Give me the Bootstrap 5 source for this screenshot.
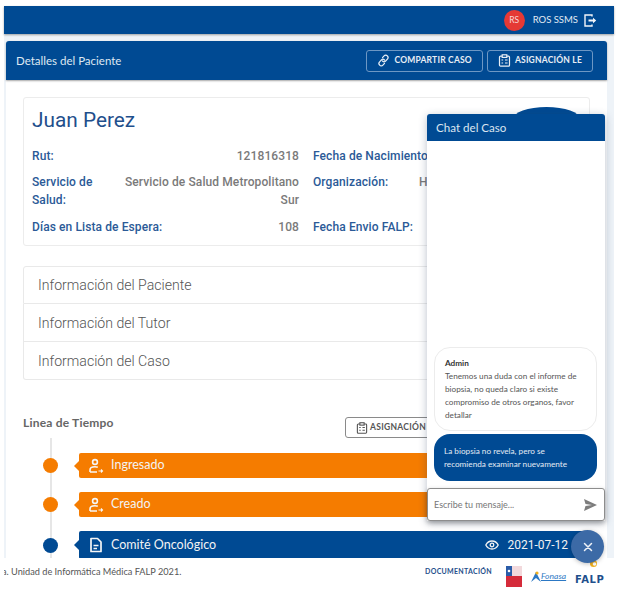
<!DOCTYPE html>
<html lang="es">
<head>
  <meta charset="UTF-8">
  <meta name="viewport" content="width=device-width, initial-scale=1">
  <title>Detalles del Paciente</title>
  <link href="https://cdn.jsdelivr.net/npm/bootstrap@5.3.0/dist/css/bootstrap.min.css" rel="stylesheet">
  <style>
    html, body { height: 592px; overflow: hidden; background: #fff; }
    body { font-family: "Lato", "Liberation Sans", sans-serif; color: #555; }
    .page-frame { position: relative; width: 621px; height: 592px; overflow: hidden; padding-top: 6px; }
    .frame-inner { width: 610px; margin-left: 4px; }

    .top-bar { height: 28px; background: #004a93; box-shadow: 0 1px 2px rgba(0,0,0,.35); padding: 0 17px 0 0; position: relative; z-index: 1; }
    .user-avatar { width: 21px; height: 21px; border-radius: 50%; background: #e53935; color: #f6d9d8; font-size: 8.5px; line-height: 21px; text-align: center; }
    .user-name { font-size: 9.5px; color: #e3ebf4; margin-left: 8px; margin-right: 6px; }

    .main-area { height: 524px; overflow: hidden; background: #eef3f8; padding: 7px 7px 0 2px; }
    .case-card { border: 0; border-radius: 3px 3px 0 0; height: 540px; background: #fff; }
    .case-head { height: 39px; background: #004a93; border: 0; border-radius: 3px 3px 0 0 !important; color: #dfe8f2; font-size: 11.5px; padding: 0 14px 0 10px; box-shadow: 0 1px 2px rgba(0,0,0,.35); }
    .head-btn { height: 22px; padding: 0 10px; border: 1px solid #6d97c4; border-radius: 3px; color: #e8eef5; font-size: 8.5px; font-weight: 700; letter-spacing: .2px; background: transparent; }
    .case-body { padding: 17px 17px 0; }

    .patient-box { height: 149px; border: 1px solid #ececec; border-radius: 3px; padding: 8px 9px 0 8px; margin-bottom: 20px; }
    .patient-name { font-family: "Roboto", "Liberation Sans", sans-serif; font-size: 20.8px; font-weight: 400; color: #1f4f8c; line-height: 28px; margin: 0 0 13px; }
    .info-row { --bs-gutter-x: 14px; font-family: "Roboto", "Liberation Sans", sans-serif; font-size: 12px; letter-spacing: .1px; line-height: 18px; margin-bottom: 8px; }
    .info-row + .info-row + .info-row { margin-top: 9px; }
    .info-label { font-weight: 500; color: #2b5a97; white-space: nowrap; }
    .info-label.wraps { white-space: normal; width: 90px; flex-shrink: 0; }
    .info-label.org-label { width: 106px; flex-shrink: 0; }
    .info-value { color: #7a7a7a; font-weight: 500; text-align: right; }

    .info-list { margin-bottom: 37px; border-radius: 3px; }
    .info-list .list-group-item { height: 38px; padding: 2px 14px 0; display: flex; align-items: center; font-family: "Roboto", "Liberation Sans", sans-serif; font-weight: 300; font-size: 14.1px; color: #555; border-color: #e9e9e9; }

    .time-head { height: 21px; margin-top: 1px; }
    .time-title { font-size: 12px; font-weight: 700; color: #666; letter-spacing: .2px; margin: 0 0 8px; }
    .assign-btn { height: 21px; width: 115px; margin-right: 130px; padding: 0 0 0 10px; border: 1px solid #8a8a8a; border-radius: 3px; font-size: 8.5px; font-weight: 700; color: #555; letter-spacing: .3px; background: #fff; white-space: nowrap; gap: 2px; }

    .time-track { position: relative; padding: 15px 0 0 56px; }
    .time-track::before { content: ""; position: absolute; left: 27px; top: 0; width: 2px; height: 130px; background: #e6e6e6; }
    .time-row { position: relative; height: 25px; margin-bottom: 14px; border-radius: 2px; display: flex; align-items: center; color: #f3f3f3; font-size: 12.5px; padding: 0 22px 0 9px; }
    .time-row::before { content: ""; position: absolute; left: -5px; top: 50%; margin-top: -5px; border-style: solid; border-width: 5px 5px 5px 0; border-color: transparent; }
    .time-row::after { content: ""; position: absolute; left: -36px; top: 50%; margin-top: -7.5px; width: 15px; height: 15px; border-radius: 50%; }
    .row-orange { background: #f57c00; }
    .row-orange::before { border-right-color: #f57c00; }
    .row-orange::after { background: #f57c00; }
    .row-blue { background: #004a93; height: 28px; }
    .row-blue::before { border-right-color: #004a93; }
    .row-blue::after { background: #004a93; }
    .time-label { margin-left: 7px; }
    .time-date { font-family: "Roboto", "Liberation Sans", sans-serif; font-size: 12px; margin-left: 8px; }

    .site-foot { height: 34px; padding-right: 7px; overflow: hidden; }
    .foot-copy { font-size: 9.2px; color: #555; margin: 0 0 7px -2px; white-space: nowrap; }
    .foot-logos { margin-top: 3px; }
    .foot-link { font-size: 7px; font-weight: 700; color: #1f4f8c; letter-spacing: .3px; margin-right: 14px; position: relative; top: -5px; }
    .fonasa-mark { margin: 0 8px; width: 37px; }
    .fonasa-word { font-size: 8.5px; font-style: italic; color: #2c78c4; margin-left: -1px; text-decoration: underline; text-decoration-thickness: .5px; }
    .falp-mark { position: relative; width: 32px; }
    .falp-word { font-family: "DejaVu Sans", sans-serif; font-size: 10px; font-weight: 700; color: #1f4f8c; letter-spacing: .6px; }
    .falp-star { position: absolute; left: 14px; top: -6px; }

    .chat-blob { position: absolute; left: 513px; top: 107px; width: 67px; height: 24px; border-radius: 50%/50%; background: #004a93; }
    .chat-panel { position: absolute; left: 427px; top: 114px; width: 178px; height: 407px; background: #fff; border-radius: 3px 3px 0 0; box-shadow: 0 2px 9px rgba(40,60,90,.32); }
    .chat-head { height: 27px; background: #004a93; color: #dbe5f0; font-size: 11.6px; padding-left: 9px; border-radius: 3px 3px 0 0; }
    .chat-msgs { padding: 0 8px 7px 7px; }
    .bubble { font-size: 8.2px; line-height: 13px; border-radius: 16px; padding: 9px 10px; color: #555; }
    .bubble-in { height: 84px; border: 1px solid #ececec; margin-bottom: 3px; }
    .bubble-in b { color: #333; display: block; }
    .bubble-out { height: 47px; background: #004a93; color: #e3ebf4; padding: 11px 26px 0 10px; }
    .chat-input { height: 33px; border: 1px solid #8d8d8d; border-radius: 3px; background: #fff; padding: 0 7px 0 6px; font-size: 9px; color: #777; box-shadow: 0 2px 5px rgba(0,0,0,.28); width: 178px; }

    .chat-fab { position: absolute; left: 571px; top: 530px; width: 33px; height: 33px; padding: 0; border: 0; border-radius: 50%; background: #3c6aa6; box-shadow: 0 1px 4px rgba(0,0,0,.25); display: flex; align-items: center; justify-content: center; }
  </style>
</head>
<body>
  <div class="page-frame">
    <div class="frame-inner">

      <!-- barra superior -->
      <nav class="top-bar d-flex align-items-center justify-content-end">
        <span class="user-avatar">RS</span>
        <span class="user-name">ROS SSMS</span>
        <svg width="13" height="13" viewBox="0 0 13 13" fill="none" stroke="#f2f5f9" stroke-width="1.4"><path d="M8 2.500V1H1v11h7v-1.500"/><path d="M4.500 6.500H11" stroke-width="2"/><path d="M9 3.800l3.200 2.700L9 9.200z" fill="#f2f5f9" stroke="none"/></svg>
      </nav>

      <div class="main-area">
        <div class="card case-card">
          <div class="card-header case-head d-flex align-items-center justify-content-between">
            <span>Detalles del Paciente</span>
            <div class="d-flex gap-1">
              <button class="btn head-btn d-flex align-items-center gap-1" type="button">
                <svg width="13" height="13" viewBox="0 0 13 13" fill="none" stroke="#e8eef5" stroke-width="1.2" stroke-linecap="round"><path d="M5.500 3.600l1.600-1.700a2.200 2.200 0 0 1 3.200 0l.1.100a2.200 2.200 0 0 1 0 3.100L8.600 7a2.200 2.200 0 0 1-3.100 0"/><path d="M7.500 9.400l-1.600 1.700a2.200 2.200 0 0 1-3.200 0l-.1-.1a2.200 2.200 0 0 1 0-3.100L4.400 6a2.200 2.200 0 0 1 3.100 0"/></svg>
                COMPARTIR CASO
              </button>
              <button class="btn head-btn d-flex align-items-center gap-1" type="button">
                <svg width="13" height="13" viewBox="0 0 13 13" fill="none" stroke="#e8eef5" stroke-width="1.2"><rect x="1.500" y="2.200" width="10" height="10" rx="1"/><rect x="4.200" y=".8" width="4.600" height="2.600" fill="#004a93"/><path d="M3.500 6h1.600M7 6h2.600M3.500 9h1.600M7 9h2.600"/></svg>
                ASIGNACIÓN LE
              </button>
            </div>
          </div>

          <div class="case-body">
            <div class="patient-box">
              <h2 class="patient-name">Juan Perez</h2>
              <div class="row info-row">
                <div class="col-6 d-flex justify-content-between"><span class="info-label">Rut:</span><span class="info-value">121816318</span></div>
                <div class="col-6 d-flex"><span class="info-label">Fecha de Nacimiento:</span></div>
              </div>
              <div class="row info-row">
                <div class="col-6 d-flex justify-content-between"><span class="info-label wraps">Servicio de Salud:</span><span class="info-value">Servicio de Salud Metropolitano Sur</span></div>
                <div class="col-6 d-flex"><span class="info-label org-label">Organización:</span><span class="info-value">Hospital</span></div>
              </div>
              <div class="row info-row">
                <div class="col-6 d-flex justify-content-between"><span class="info-label">Días en Lista de Espera:</span><span class="info-value">108</span></div>
                <div class="col-6 d-flex"><span class="info-label">Fecha Envio FALP:</span></div>
              </div>
            </div>

            <div class="list-group info-list">
              <div class="list-group-item">Información del Paciente</div>
              <div class="list-group-item">Información del Tutor</div>
              <div class="list-group-item">Información del Caso</div>
            </div>

            <div class="time-head d-flex align-items-center justify-content-between">
              <h3 class="time-title">Linea de Tiempo</h3>
              <button class="btn assign-btn d-flex align-items-center" type="button">
                <svg width="12" height="12" viewBox="0 0 13 13" fill="none" stroke="#555" stroke-width="1.2"><rect x="1.500" y="2.200" width="10" height="10" rx="1"/><rect x="4.200" y=".8" width="4.600" height="2.600" fill="#fff"/><path d="M3.500 6h1.600M7 6h2.600M3.500 9h1.600M7 9h2.600"/></svg>
                ASIGNACIÓN LE
              </button>
            </div>

            <div class="time-track">
              <div class="time-row row-orange">
                <svg width="16" height="16" viewBox="0 0 16 16" fill="none" stroke="#f6f6f6" stroke-width="1.600"><circle cx="7" cy="4" r="2.400"/><path d="M2 14v-2c0-2 1.800-3.200 5-3.200 1 0 2 .1 2.800.4M2 14h7"/><path d="M10.500 13h3.500M13 11.500l1.500 1.500-1.500 1.500" stroke-width="1.100"/></svg>
                <span class="time-label">Ingresado</span>
              </div>
              <div class="time-row row-orange">
                <svg width="16" height="16" viewBox="0 0 16 16" fill="none" stroke="#f6f6f6" stroke-width="1.600"><circle cx="7" cy="4" r="2.400"/><path d="M2 14v-2c0-2 1.800-3.200 5-3.200 1 0 2 .1 2.800.4M2 14h7"/><path d="M10.500 13h3.500M13 11.500l1.500 1.500-1.500 1.500" stroke-width="1.100"/></svg>
                <span class="time-label">Creado</span>
              </div>
              <div class="time-row row-blue">
                <svg width="16" height="16" viewBox="0 0 16 16" fill="none" stroke="#f6f6f6" stroke-width="1.700" stroke-linejoin="round"><path d="M3 1.500h6.500L13 5v9.500H3z"/><path d="M5.500 8.500h5M5.500 11.500h3.500"/></svg>
                <span class="time-label">Comité Oncológico</span>
                <svg class="ms-auto" width="14" height="14" viewBox="0 0 14 14" fill="none" stroke="#f3f3f3" stroke-width="1.300"><path d="M.8 7C2.200 4.300 4.400 3 7 3s4.800 1.300 6.200 4C11.800 9.700 9.600 11 7 11S2.200 9.700.8 7z"/><circle cx="7" cy="7" r="1.800"/></svg>
                <span class="time-date">2021-07-12</span>
              </div>
            </div>
          </div>
        </div>
      </div>

      <footer class="site-foot d-flex align-items-center justify-content-between">
        <span class="foot-copy">a. Unidad de Informática Médica FALP 2021.</span>
        <div class="foot-logos d-flex align-items-center">
          <span class="foot-link">DOCUMENTACIÓN</span>
          <svg width="16" height="21" viewBox="0 0 16 21"><rect width="16" height="21" fill="#d52b3a"/><rect width="6" height="10" fill="#2a5ca8"/><rect x="6" width="10" height="10" fill="#f2d9dc"/><circle cx="3" cy="5" r="1.300" fill="#fff"/></svg>
          <span class="fonasa-mark d-flex align-items-center">
            <svg width="12" height="14" viewBox="0 0 12 14"><path d="M1 12L6 2l5 10-5-4z" fill="#2c78c4"/><circle cx="7" cy="3" r="1.600" fill="#f2b11e"/></svg>
            <span class="fonasa-word">Fonasa</span>
          </span>
          <span class="falp-mark">
            <span class="falp-word">FALP</span>
            <svg class="falp-star" width="9" height="9" viewBox="0 0 9 9"><circle cx="4.500" cy="4.500" r="3.500" fill="#f2b11e"/><circle cx="5.500" cy="5" r="1.800" fill="#fff"/></svg>
          </span>
        </div>
      </footer>
    </div>

    <!-- chat flotante -->
    <div class="chat-blob"></div>
    <div class="chat-panel d-flex flex-column">
      <div class="chat-head d-flex align-items-center">Chat del Caso</div>
      <div class="chat-msgs mt-auto">
        <div class="bubble bubble-in"><b>Admin</b>Tenemos una duda con el informe de biopsia, no queda claro si existe compromiso de otros organos, favor detallar</div>
        <div class="bubble bubble-out">La biopsia no revela, pero se recomienda examinar nuevamente</div>
      </div>
      <div class="chat-input d-flex align-items-center justify-content-between">
        <span>Escribe tu mensaje...</span>
        <svg width="13" height="12" viewBox="0 0 13 12"><path d="M0 0l13 6-13 6 1.500-5L8 6 1.500 5z" fill="#7d7d7d"/></svg>
      </div>
    </div>
    <button class="chat-fab" type="button" aria-label="Cerrar">
      <svg width="10" height="10" viewBox="0 0 10 10" stroke="#eef2f7" stroke-width="1.500" stroke-linecap="round"><path d="M1.500 1.500l7 7M8.500 1.500l-7 7"/></svg>
    </button>
  </div>
  <script src="https://cdn.jsdelivr.net/npm/bootstrap@5.3.0/dist/js/bootstrap.bundle.min.js"></script>
</body>
</html>
